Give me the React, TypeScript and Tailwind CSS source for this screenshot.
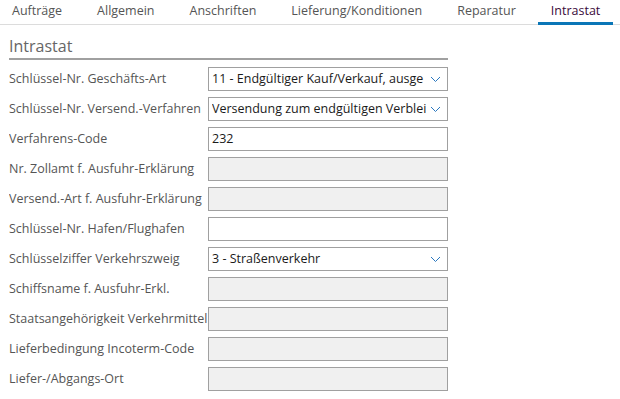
import React from "react";

const tabs = ["Aufträge", "Allgemein", "Anschriften", "Lieferung/Konditionen", "Reparatur", "Intrastat"];

type Row = { label: string; kind: "select" | "input" | "disabled"; value?: string };

const rows: Row[] = [
  { label: "Schlüssel-Nr. Geschäfts-Art", kind: "select", value: "11 - Endgültiger Kauf/Verkauf, ausge" },
  { label: "Schlüssel-Nr. Versend.-Verfahren", kind: "select", value: "Versendung zum endgültigen Verblei" },
  { label: "Verfahrens-Code", kind: "input", value: "232" },
  { label: "Nr. Zollamt f. Ausfuhr-Erklärung", kind: "disabled" },
  { label: "Versend.-Art f. Ausfuhr-Erklärung", kind: "disabled" },
  { label: "Schlüssel-Nr. Hafen/Flughafen", kind: "input", value: "" },
  { label: "Schlüsselziffer Verkehrszweig", kind: "select", value: "3 - Straßenverkehr" },
  { label: "Schiffsname f. Ausfuhr-Erkl.", kind: "disabled" },
  { label: "Staatsangehörigkeit Verkehrmittel", kind: "disabled" },
  { label: "Lieferbedingung Incoterm-Code", kind: "disabled" },
  { label: "Liefer-/Abgangs-Ort", kind: "disabled" },
];

function Chevron() {
  return (
    <svg width="11" height="7" viewBox="0 0 11 7" className="shrink-0">
      <path d="M1 1 L5.5 5.5 L10 1" fill="none" stroke="#2a78c0" strokeWidth="1" />
    </svg>
  );
}

export default function App() {
  return (
    <div
      className="w-[620px] h-[399px] bg-white overflow-hidden text-[#555]"
      style={{ fontFamily: '"Open Sans", "Noto Sans", sans-serif' }}
    >
      <div className="flex h-[25px] border-b border-[#dcdcdc] pl-[12px] text-[12.5px]">
        {tabs.map((t, i) => {
          const active = i === tabs.length - 1;
          return (
            <div
              key={t}
              className={
                "h-[25px] leading-[22px] whitespace-nowrap " +
                (active
                  ? "px-[13px] border-b-[3px] border-[#0a76b7] text-[#3a0a3a] -ml-[13px]"
                  : "mr-[35px]")
              }
            >
              {t}
            </div>
          );
        })}
      </div>
      <div className="pl-[9px] w-[448px]">
        <div className="mt-[9px] h-[26px] text-[16px] leading-[24px] text-[#666] border-b-2 border-[#a0a0a0]">
          Intrastat
        </div>
        <div className="flex flex-col gap-[6px] mt-[7px]">
          {rows.map((r) => (
            <div key={r.label} className="flex items-center h-[24px]">
              <div className="w-[199px] shrink-0 overflow-hidden whitespace-nowrap text-[12.5px] leading-[24px]">
                {r.label}
              </div>
              <div
                className={
                  "flex-1 h-[24px] border border-[#a0a0a0] flex items-center pl-[3px] pr-[6px] text-[12.5px] text-[#1a1a1a] overflow-hidden " +
                  (r.kind === "disabled" ? "bg-[#f0f0f0]" : "bg-white")
                }
              >
                <span className="flex-1 overflow-hidden whitespace-nowrap">{r.value}</span>
                {r.kind === "select" && <Chevron />}
              </div>
            </div>
          ))}
        </div>
      </div>
    </div>
  );
}
